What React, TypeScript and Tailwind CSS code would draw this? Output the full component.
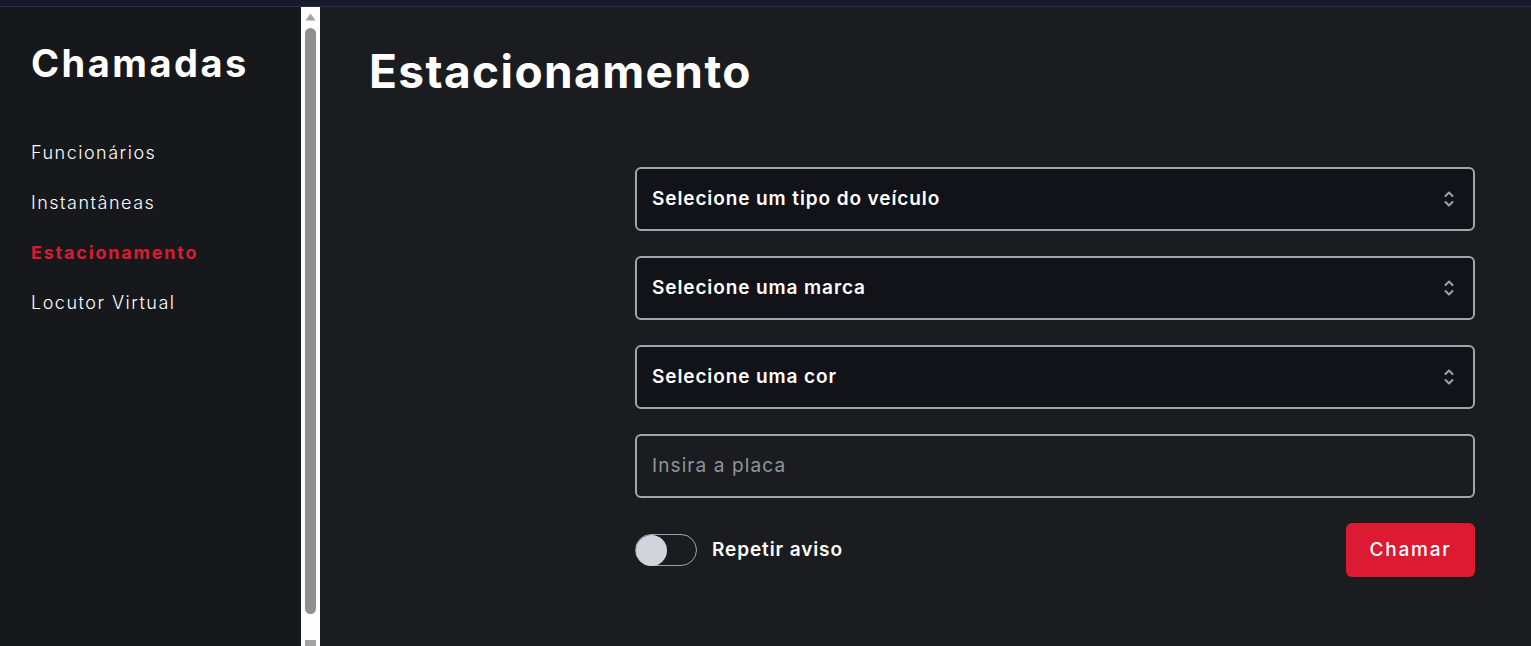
const font = "font-['Inter','Noto_Sans',sans-serif]";

const fields = [
  "Selecione um tipo do veículo",
  "Selecione uma marca",
  "Selecione uma cor",
];

const menu = [
  { label: "Funcionários", active: false },
  { label: "Instantâneas", active: false },
  { label: "Estacionamento", active: true },
  { label: "Locutor Virtual", active: false },
];

function UpDown() {
  return (
    <svg width="10" height="18" viewBox="0 0 10 18" fill="none" stroke="#9ca3af" strokeWidth="2" strokeLinecap="round" strokeLinejoin="round">
      <polyline points="1.5,6 5,2.5 8.5,6" />
      <polyline points="1.5,12 5,15.5 8.5,12" />
    </svg>
  );
}

export default function App() {
  return (
    <div className={`${font} h-[646px] w-full overflow-hidden flex flex-col bg-[#1b1c1f] text-white`}>
      <div className="h-[7px] shrink-0 bg-[#161a2b] border-b border-[#2a3040]" />
      <div className="flex flex-1 min-h-0">
        <aside className="w-[301px] shrink-0 bg-[#17181c] pl-[31px] pt-[34px]">
          <h1 className="text-[38px] leading-[44px] font-bold tracking-[2.5px]">Chamadas</h1>
          <nav className="mt-[54px] flex flex-col gap-[22px]">
            {menu.map((m) => (
              <a
                key={m.label}
                className={
                  m.active
                    ? "text-[18px] leading-[28px] font-bold text-[#dc1a32] tracking-[1.8px]"
                    : "text-[18px] leading-[28px] font-light text-white tracking-[1.5px]"
                }
              >
                {m.label}
              </a>
            ))}
          </nav>
        </aside>

        <div className="w-[19px] shrink-0 bg-[#fdfdfd] flex flex-col items-center pt-[6px]">
          <svg width="11" height="8" viewBox="0 0 11 8" className="shrink-0">
            <polygon points="5.5,0.5 10.5,7.5 0.5,7.5" fill="#a3a3a3" />
          </svg>
          <div className="mt-[7px] w-[11px] h-[589px] rounded-full bg-[#8f8f8f]" />
          <div className="mt-[26px] w-[11px] h-[6px] bg-[#a3a3a3]" />
        </div>

        <main className="flex-1 pl-[49px] pr-[56px] pt-[38px]">
          <h2 className="text-[46px] leading-[52px] font-bold tracking-[1.4px]">Estacionamento</h2>

          <div className="ml-auto mt-[70px] w-[840px] flex flex-col gap-[25px]">
            {fields.map((f) => (
              <div
                key={f}
                className="h-[64px] rounded-md border-2 border-[#a1a5ae] bg-[#121318] flex items-center justify-between pl-[15px] pr-[19px]"
              >
                <span className="text-[19px] font-semibold tracking-[0.9px]">{f}</span>
                <UpDown />
              </div>
            ))}

            <div className="h-[64px] rounded-md border-2 border-[#a1a5ae] flex items-center pl-[15px]">
              <input
                placeholder="Insira a placa"
                className="w-full bg-transparent outline-none text-[19px] tracking-[1.1px] placeholder:text-[#8f949c] text-white"
              />
            </div>

            <div className="flex items-center justify-between">
              <div className="flex items-center gap-[15px]">
                <div className="w-[62px] h-[32px] rounded-full border border-[#9ca3af] flex items-center">
                  <div className="w-[31px] h-[31px] rounded-full bg-[#d1d5db]" />
                </div>
                <span className="text-[19px] font-semibold tracking-[0.9px]">Repetir aviso</span>
              </div>
              <button className="w-[129px] h-[54px] rounded-md bg-[#dc1a32] text-[19px] font-medium tracking-[1.8px] text-white">
                Chamar
              </button>
            </div>
          </div>
        </main>
      </div>
    </div>
  );
}
